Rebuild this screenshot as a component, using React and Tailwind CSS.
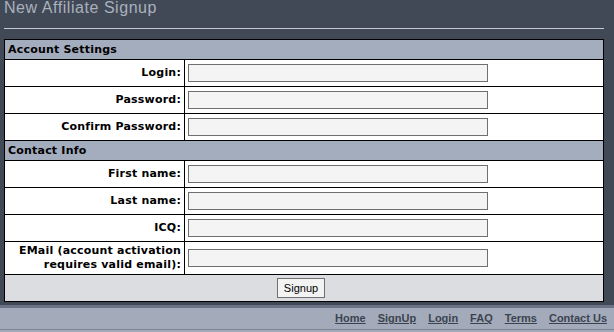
import React from "react";

function Row({ label, lines }) {
  return (
    <tr>
      <td className="w-[180px] border border-black bg-white pr-[3px] pl-[3px] py-[2px] text-right align-middle font-bold text-[11px] leading-[14px] tracking-[0.2px] text-black">
        {lines ? lines.map((l, i) => <div key={i}>{l}</div>) : label}
      </td>
      <td className="border border-black bg-white pl-[3px] py-[4px] h-[27px] align-middle">
        <div className="w-[300px] h-[18px] border border-[#6f6f6f] bg-[#f4f4f4]" />
      </td>
    </tr>
  );
}

function Header({ children }) {
  return (
    <tr>
      <td
        colSpan={2}
        className="border border-black bg-[#a4adbd] px-[3px] h-[20px] py-0 align-middle font-bold text-[11px] leading-[13px] tracking-[0.2px] text-black"
      >
        {children}
      </td>
    </tr>
  );
}

export default function App() {
  return (
    <div className="w-[614px] h-[332px] overflow-hidden bg-[#424956] font-['DejaVu_Sans',sans-serif]">
      <div className="pl-[4px] pr-[10px]">
        <div className="font-['Liberation_Sans',sans-serif] text-[16px] leading-[16px] tracking-[0.55px] text-[#a9b1bd]">
          New Affiliate Signup
        </div>
        <div className="mt-[12px] h-px w-[600px] bg-[#c4c9d1]" />
        <table className="mt-[10px] w-[600px] table-fixed border-collapse border border-black">
          <colgroup>
            <col className="w-[180px]" />
            <col />
          </colgroup>
          <tbody>
            <Header>Account Settings</Header>
            <Row label="Login:" />
            <Row label="Password:" />
            <Row label="Confirm Password:" />
            <Header>Contact Info</Header>
            <Row label="First name:" />
            <Row label="Last name:" />
            <Row label="ICQ:" />
            <Row lines={["EMail (account activation", "requires valid email):"]} />
            <tr>
              <td colSpan={2} className="border border-black bg-[#dcdde0] h-[27px] p-0 align-middle">
                <div className="flex justify-center pr-[6px]">
                  <button className="h-[20px] w-[48px] border border-[#707070] bg-[#f3f3f3] font-['Liberation_Sans',sans-serif] text-[11px] leading-[18px] text-black">
                    Signup
                  </button>
                </div>
              </td>
            </tr>
          </tbody>
        </table>
      </div>
      <div className="mt-[3px] border-t-[3px] border-[#6b7484] bg-[#a3abba] h-[25px] border-b border-b-[#7b8494] flex items-center justify-end gap-[12px] pr-[7px] font-['Liberation_Sans',sans-serif] text-[11px] font-bold text-[#3c4350]">
        <span className="underline">Home</span>
        <span className="underline">SignUp</span>
        <span className="underline">Login</span>
        <span className="underline">FAQ</span>
        <span className="underline">Terms</span>
        <span className="underline">Contact Us</span>
      </div>
      <div className="h-[4px] bg-[#a3abba]" />
    </div>
  );
}
